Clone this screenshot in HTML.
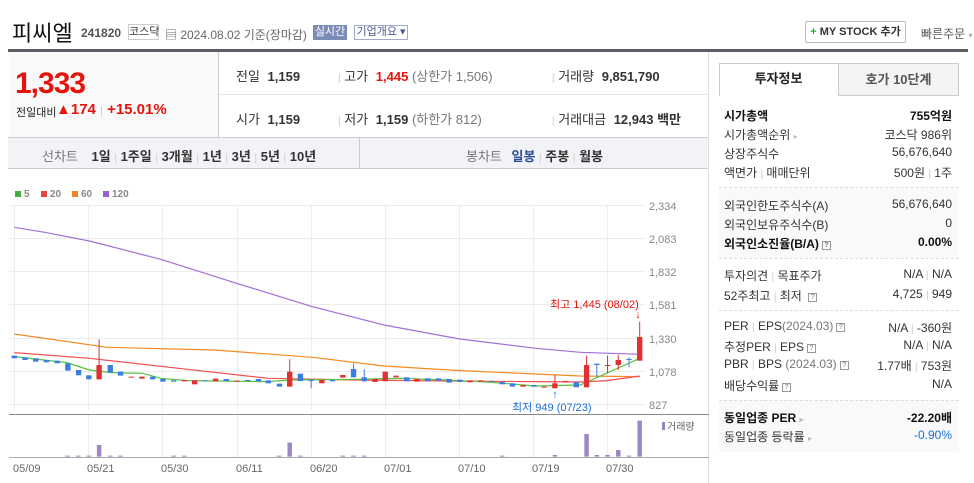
<!DOCTYPE html>
<html><head><meta charset="utf-8"><style>
*{margin:0;padding:0;box-sizing:border-box}
body{width:974px;height:483px;background:#fff;font-family:"Liberation Sans","Noto Sans CJK KR",sans-serif;position:relative;overflow:hidden;color:#333}
.a{position:absolute;white-space:nowrap}
.b{font-weight:bold}
.r{color:#e4140d}
.g{color:#777}
.rp .a{font-size:12px}
.rt{right:22px;text-align:right}
.sep{color:#ccc;font-size:10px}
.q{display:inline-block;width:9px;height:9px;border:1px solid #999;font-size:7px;line-height:7px;text-align:center;color:#777;vertical-align:1px;margin-left:3px}
</style></head><body>
<div class="a" style="left:12px;top:16px;font-size:22px;color:#111">피씨엘</div>
<div class="a b" style="left:81px;top:26px;font-size:12px;color:#555">241820</div>
<div class="a" style="left:128px;top:24px;width:31px;height:16px;border:1px solid #ccc;font-size:11px;line-height:14px;text-align:center;color:#333">코스닥</div>
<div class="a" style="left:165px;top:26px;font-size:12px;color:#666">▤ 2024.08.02 기준(장마감)</div>
<div class="a" style="left:313px;top:25px;width:34px;height:15px;background:#7c8cb6;color:#fff;font-size:11px;line-height:15px;text-align:center">실시간</div>
<div class="a" style="left:354px;top:25px;width:54px;height:15px;border:1px solid #a0acc8;color:#4a5c92;font-size:11px;line-height:13px;text-align:center">기업개요 ▾</div>
<div class="a b" style="left:805px;top:21px;width:101px;height:22px;border:1px solid #bbb;border-radius:2px;font-size:11px;line-height:20px;text-align:center;color:#333"><span style="color:#2eaa2e">+</span> MY STOCK 추가</div>
<div class="a" style="left:921px;top:25px;font-size:12px;color:#555">빠른주문 <span style="font-size:8px;color:#aaa">▾</span></div>
<div class="a" style="left:8px;top:49px;width:960px;height:3px;background:#5b5e66"></div>

<div class="a" style="left:9px;top:52px;width:209px;height:85px;background:#f9f9f9"></div>
<div class="a b r" style="left:15px;top:67px;font-size:30px;letter-spacing:-1px">1,333</div>
<div class="a" style="left:16px;top:104px;font-size:11px;color:#222">전일대비</div>
<div class="a b r" style="left:56px;top:101px;font-size:15px">▲174 <span style="color:#ccc;font-weight:normal;font-size:11px">|</span> +15.01%</div>
<div class="a" style="left:218px;top:52px;width:1px;height:85px;background:#ccc"></div>
<div class="a" style="left:219px;top:94px;width:490px;height:1px;background:#e5e5e5"></div>
<div style="font-size:13px">
<div class="a" style="left:236px;top:66px">전일 <b style="margin-left:4px">1,159</b></div>
<div class="a" style="left:236px;top:109px">시가 <b style="margin-left:4px">1,159</b></div>
<div class="a" style="left:338px;top:66px"><span class="sep">|</span> 고가 <b class="r" style="margin-left:4px">1,445</b> <span class="g">(상한가 1,506)</span></div>
<div class="a" style="left:338px;top:109px"><span class="sep">|</span> 저가 <b style="margin-left:4px">1,159</b> <span class="g">(하한가 812)</span></div>
<div class="a" style="left:552px;top:66px"><span class="sep">|</span> 거래량 <b style="margin-left:4px">9,851,790</b></div>
<div class="a" style="left:552px;top:109px"><span class="sep">|</span> 거래대금 <b style="margin-left:4px">12,943</b> <b>백만</b></div>
</div>
<div class="a" style="left:8px;top:137px;width:701px;height:32px;background:#f2f3f6;border-top:1px solid #ccc;border-bottom:1px solid #ccc"></div>
<div class="a" style="left:359px;top:138px;width:1px;height:30px;background:#ccc"></div>
<div class="a" style="left:42px;top:146px;font-size:13px;color:#777">선차트 <b style="color:#333;margin-left:10px">1일</b> <span class="sep">|</span> <b style="color:#333">1주일</b> <span class="sep">|</span> <b style="color:#333">3개월</b> <span class="sep">|</span> <b style="color:#333">1년</b> <span class="sep">|</span> <b style="color:#333">3년</b> <span class="sep">|</span> <b style="color:#333">5년</b> <span class="sep">|</span> <b style="color:#333">10년</b></div>
<div class="a" style="left:466px;top:146px;font-size:13px;color:#777">봉차트 <b style="color:#2c4a9a;margin-left:6px">일봉</b> <span class="sep">|</span> <b style="color:#333">주봉</b> <span class="sep">|</span> <b style="color:#333">월봉</b></div>
<div class="a" style="left:708px;top:52px;width:1px;height:431px;background:#ddd"></div>

<svg class="a" style="left:0;top:0" width="710" height="483">
<g font-family="Liberation Sans" font-size="10" font-weight="bold" fill="#888">
<rect x="15" y="191" width="6" height="6" fill="#40b040"/><text x="24" y="197">5</text>
<rect x="41" y="191" width="6" height="6" fill="#e84545"/><text x="50" y="197">20</text>
<rect x="72" y="191" width="6" height="6" fill="#f58220"/><text x="81" y="197">60</text>
<rect x="103" y="191" width="6" height="6" fill="#9b5fcf"/><text x="112" y="197">120</text>
</g>
<g stroke="#ececec" stroke-width="1">
<line x1="9" x2="646" y1="205.5" y2="205.5"/><line x1="9" x2="646" y1="238.5" y2="238.5"/><line x1="9" x2="646" y1="271.5" y2="271.5"/><line x1="9" x2="646" y1="304.5" y2="304.5"/><line x1="9" x2="646" y1="338.5" y2="338.5"/><line x1="9" x2="646" y1="371.5" y2="371.5"/><line x1="9" x2="646" y1="404.5" y2="404.5"/>
<line x1="14.5" x2="14.5" y1="205" y2="410"/><line x1="88.5" x2="88.5" y1="205" y2="410"/><line x1="162.5" x2="162.5" y1="205" y2="410"/><line x1="237.5" x2="237.5" y1="205" y2="410"/><line x1="311.5" x2="311.5" y1="205" y2="410"/><line x1="385.5" x2="385.5" y1="205" y2="410"/><line x1="459.5" x2="459.5" y1="205" y2="410"/><line x1="533.5" x2="533.5" y1="205" y2="410"/><line x1="607.5" x2="607.5" y1="205" y2="410"/>
</g>
<g font-family="Liberation Sans" font-size="11" fill="#888">
<text x="649" y="210">2,334</text><text x="649" y="243">2,083</text><text x="649" y="276">1,832</text><text x="649" y="309">1,581</text><text x="649" y="343">1,330</text><text x="649" y="376">1,078</text><text x="649" y="409">827</text>
</g>
<line x1="9" x2="709" y1="414.5" y2="414.5" stroke="#888"/>
<line x1="9" x2="709" y1="457.5" y2="457.5" stroke="#aaa"/>
<g stroke="#ececec"><line x1="88.5" x2="88.5" y1="415" y2="457"/><line x1="162.5" x2="162.5" y1="415" y2="457"/><line x1="237.5" x2="237.5" y1="415" y2="457"/><line x1="311.5" x2="311.5" y1="415" y2="457"/><line x1="385.5" x2="385.5" y1="415" y2="457"/><line x1="459.5" x2="459.5" y1="415" y2="457"/><line x1="533.5" x2="533.5" y1="415" y2="457"/><line x1="607.5" x2="607.5" y1="415" y2="457"/></g>
<g font-family="Liberation Sans" font-size="11" fill="#666">
<text x="13" y="472">05/09</text><text x="87" y="472">05/21</text><text x="161" y="472">05/30</text><text x="236" y="472">06/11</text><text x="310" y="472">06/20</text><text x="384" y="472">07/01</text><text x="458" y="472">07/10</text><text x="532" y="472">07/19</text><text x="606" y="472">07/30</text>
</g>
<rect x="662" y="422" width="3" height="8" fill="#9b86c6"/><text x="667" y="430" font-family="Liberation Sans,Noto Sans CJK KR" font-size="10" fill="#666">거래량</text>
<g transform="translate(0,170) scale(0.4464,0.3333)">
<g fill="none">
<polyline vector-effect="non-scaling-stroke" stroke-width="1.2" stroke="#a46ed8" points="32,172 100,187 200,213 360,268 530,340 700,410 860,465 1030,507 1200,535 1300,547 1433,553"/>
<polyline vector-effect="non-scaling-stroke" stroke-width="1.2" stroke="#f58a20" points="32,492 240,532 480,540 700,562 860,588 1030,602 1200,612 1300,618 1433,620"/>
<polyline vector-effect="non-scaling-stroke" stroke-width="1.2" stroke="#ef5050" points="32,548 200,565 400,595 600,625 800,630 1000,633 1200,635 1300,636 1360,632 1433,618"/>
<polyline vector-effect="non-scaling-stroke" stroke-width="1.2" stroke="#58c040" points="32,560 150,578 200,600 250,608 320,610 360,625 420,632 600,635 650,630 800,628 900,625 1000,630 1100,637 1200,648 1300,645 1433,565"/>
</g>
<g>
<line x1="222" x2="222" y1="508" y2="628" stroke="#e03030" vector-effect="non-scaling-stroke"/>
<line x1="649" x2="649" y1="568" y2="650" stroke="#e03030" vector-effect="non-scaling-stroke"/>
<line x1="697" x2="697" y1="630" y2="655" stroke="#3a7ee0" vector-effect="non-scaling-stroke"/>
<line x1="792" x2="792" y1="580" y2="622" stroke="#3a7ee0" vector-effect="non-scaling-stroke"/>
<line x1="816" x2="816" y1="598" y2="634" stroke="#3a7ee0" vector-effect="non-scaling-stroke"/>
<line x1="1243" x2="1243" y1="615" y2="655" stroke="#e03030" vector-effect="non-scaling-stroke"/>
<line x1="1314" x2="1314" y1="557" y2="652" stroke="#e03030" vector-effect="non-scaling-stroke"/>
<line x1="1337" x2="1337" y1="581" y2="620" stroke="#3a7ee0" vector-effect="non-scaling-stroke"/>
<line x1="1361" x2="1361" y1="557" y2="610" stroke="#e03030" vector-effect="non-scaling-stroke"/>
<line x1="1385" x2="1385" y1="555" y2="600" stroke="#e03030" vector-effect="non-scaling-stroke"/>
<line x1="1409" x2="1409" y1="562" y2="592" stroke="#3a7ee0" vector-effect="non-scaling-stroke"/>
<line x1="1433" x2="1433" y1="455" y2="572" stroke="#e03030" vector-effect="non-scaling-stroke"/>
</g>
<g fill="#3a7ee0">
<rect x="26" y="557" width="12" height="8"/><rect x="50" y="562" width="12" height="8"/><rect x="74" y="565" width="12" height="10"/><rect x="98" y="570" width="12" height="7"/><rect x="122" y="572" width="12" height="8"/><rect x="146" y="580" width="12" height="22"/><rect x="170" y="600" width="12" height="16"/><rect x="193" y="616" width="12" height="12"/><rect x="241" y="585" width="12" height="23"/><rect x="264" y="605" width="12" height="12"/><rect x="336" y="620" width="12" height="8"/><rect x="359" y="627" width="12" height="8"/><rect x="383" y="631" width="12" height="4"/><rect x="454" y="631" width="12" height="3"/><rect x="501" y="627" width="12" height="6"/><rect x="549" y="630" width="12" height="3"/><rect x="573" y="627" width="12" height="7"/><rect x="595" y="631" width="12" height="9"/><rect x="620" y="641" width="12" height="9"/><rect x="667" y="611" width="12" height="22"/><rect x="691" y="630" width="12" height="3"/><rect x="739" y="630" width="12" height="4"/><rect x="786" y="597" width="12" height="25"/><rect x="810" y="622" width="12" height="12"/><rect x="905" y="622" width="12" height="12"/><rect x="952" y="625" width="12" height="9"/><rect x="976" y="625" width="12" height="7"/><rect x="1000" y="627" width="12" height="11"/><rect x="1024" y="629" width="12" height="7"/><rect x="1095" y="633" width="12" height="3"/><rect x="1119" y="636" width="12" height="7"/><rect x="1142" y="640" width="12" height="10"/><rect x="1190" y="645" width="12" height="5"/><rect x="1285" y="637" width="12" height="15"/><rect x="1331" y="581" width="12" height="4"/><rect x="1403" y="567" width="12" height="3"/>
</g>
<g fill="#e03030">
<rect x="216" y="585" width="12" height="43"/><rect x="288" y="620" width="12" height="3"/><rect x="312" y="620" width="12" height="6"/><rect x="407" y="630" width="12" height="4"/><rect x="430" y="631" width="12" height="12"/><rect x="477" y="626" width="12" height="8"/><rect x="525" y="632" width="12" height="3"/><rect x="643" y="605" width="12" height="45"/><rect x="715" y="630" width="12" height="10"/><rect x="762" y="615" width="12" height="8"/><rect x="834" y="627" width="12" height="9"/><rect x="857" y="605" width="12" height="29"/><rect x="881" y="617" width="12" height="5"/><rect x="928" y="627" width="12" height="8"/><rect x="1047" y="631" width="12" height="6"/><rect x="1071" y="631" width="12" height="4"/><rect x="1166" y="645" width="12" height="5"/><rect x="1213" y="650" width="12" height="3"/><rect x="1237" y="640" width="12" height="15"/><rect x="1261" y="633" width="12" height="3"/><rect x="1308" y="585" width="12" height="67"/><rect x="1355" y="585" width="12" height="3"/><rect x="1379" y="570" width="12" height="15"/><rect x="1427" y="501" width="12" height="71"/>
</g>
<g fill="#9b86c6">
<rect x="146" y="857" width="10" height="3"/><rect x="170" y="857" width="10" height="3"/><rect x="194" y="857" width="10" height="3"/><rect x="217" y="825" width="10" height="35"/><rect x="242" y="857" width="10" height="3"/><rect x="265" y="857" width="10" height="3"/><rect x="384" y="857" width="10" height="3"/><rect x="408" y="857" width="10" height="3"/><rect x="620" y="857" width="10" height="3"/><rect x="644" y="818" width="10" height="42"/><rect x="668" y="857" width="10" height="3"/><rect x="763" y="857" width="10" height="3"/><rect x="787" y="857" width="10" height="3"/><rect x="811" y="857" width="10" height="3"/><rect x="1120" y="857" width="10" height="3"/><rect x="1238" y="855" width="10" height="5"/><rect x="1309" y="792" width="10" height="68"/><rect x="1332" y="855" width="10" height="5"/><rect x="1356" y="855" width="10" height="5"/><rect x="1380" y="840" width="10" height="20"/><rect x="1404" y="857" width="10" height="3"/><rect x="1428" y="752" width="10" height="108"/>
</g>
</g>
<text x="550" y="308" font-family="Liberation Sans,Noto Sans CJK KR" font-size="11" fill="#e4140d">최고 1,445 (08/02)</text>
<text x="638" y="318" font-family="Liberation Sans" font-size="11" fill="#e4140d" text-anchor="middle">↓</text>
<text x="555" y="398" font-family="Liberation Sans" font-size="11" fill="#1b6fd8" text-anchor="middle">↑</text>
<text x="512" y="411" font-family="Liberation Sans,Noto Sans CJK KR" font-size="11" fill="#1b6fd8">최저 949 (07/23)</text>
</svg>

<div class="a" style="left:719px;top:63px;width:240px;height:33px;border:1px solid #ccc;border-bottom:none"></div>
<div class="a" style="left:838px;top:63px;width:121px;height:33px;background:#f3f3f3;border:1px solid #ccc;font-size:13px;font-weight:bold;color:#555;text-align:center;line-height:31px">호가 10단계</div>
<div class="a b" style="left:719px;top:63px;width:119px;height:33px;text-align:center;line-height:31px;font-size:13px;color:#222">투자정보</div>
<div class="a" style="left:719px;top:187px;width:240px;height:71px;background:#f9f9f9"></div>
<div class="a" style="left:719px;top:400px;width:240px;height:52px;background:#f9f9f9"></div>
<div class="a" style="left:719px;top:187px;width:240px;border-top:1px dashed #ddd"></div>
<div class="a" style="left:719px;top:258px;width:240px;border-top:1px dashed #ddd"></div>
<div class="a" style="left:719px;top:310px;width:240px;border-top:1px dashed #ddd"></div>
<div class="a" style="left:719px;top:400px;width:240px;border-top:1px dashed #ddd"></div>
<div class="rp">
<div class="a b" style="left:724px;top:107px;color:#111">시가총액</div><div class="a b rt" style="top:107px;color:#111">755억원</div>
<div class="a" style="left:724px;top:126px">시가총액순위 <span style="color:#bbb;font-size:8px">▸</span></div><div class="a rt" style="top:126px">코스닥 986위</div>
<div class="a" style="left:724px;top:145px">상장주식수</div><div class="a rt" style="top:145px">56,676,640</div>
<div class="a" style="left:724px;top:164px">액면가 <span class="sep">|</span> 매매단위</div><div class="a rt" style="top:164px">500원 <span class="sep">|</span> 1주</div>
<div class="a" style="left:724px;top:197px">외국인한도주식수(A)</div><div class="a rt" style="top:197px">56,676,640</div>
<div class="a" style="left:724px;top:216px">외국인보유주식수(B)</div><div class="a rt" style="top:216px">0</div>
<div class="a b" style="left:724px;top:235px;color:#111">외국인소진율(B/A)<span class="q">?</span></div><div class="a b rt" style="top:235px;color:#111">0.00%</div>
<div class="a" style="left:724px;top:267px">투자의견 <span class="sep">|</span> 목표주가</div><div class="a rt" style="top:267px">N/A <span class="sep">|</span> N/A</div>
<div class="a" style="left:724px;top:287px">52주최고 <span class="sep">|</span> 최저 <span class="q">?</span></div><div class="a rt" style="top:287px">4,725 <span class="sep">|</span> 949</div>
<div class="a" style="left:724px;top:319px">PER <span class="sep">|</span> EPS<span class="g">(2024.03)</span><span class="q">?</span></div><div class="a rt" style="top:319px">N/A <span class="sep">|</span> -360원</div>
<div class="a" style="left:724px;top:338px">추정PER <span class="sep">|</span> EPS<span class="q">?</span></div><div class="a rt" style="top:338px">N/A <span class="sep">|</span> N/A</div>
<div class="a" style="left:724px;top:357px">PBR <span class="sep">|</span> BPS <span class="g">(2024.03)</span><span class="q">?</span></div><div class="a rt" style="top:357px">1.77배 <span class="sep">|</span> 753원</div>
<div class="a" style="left:724px;top:377px">배당수익률<span class="q">?</span></div><div class="a rt" style="top:377px">N/A</div>
<div class="a b" style="left:724px;top:409px;color:#111">동일업종 PER <span style="color:#bbb;font-size:8px">▸</span></div><div class="a b rt" style="top:409px;color:#111">-22.20배</div>
<div class="a" style="left:724px;top:428px">동일업종 등락률 <span style="color:#bbb;font-size:8px">▸</span></div><div class="a rt" style="top:428px;color:#1b6fd8">-0.90%</div>
</div>
</body></html>
